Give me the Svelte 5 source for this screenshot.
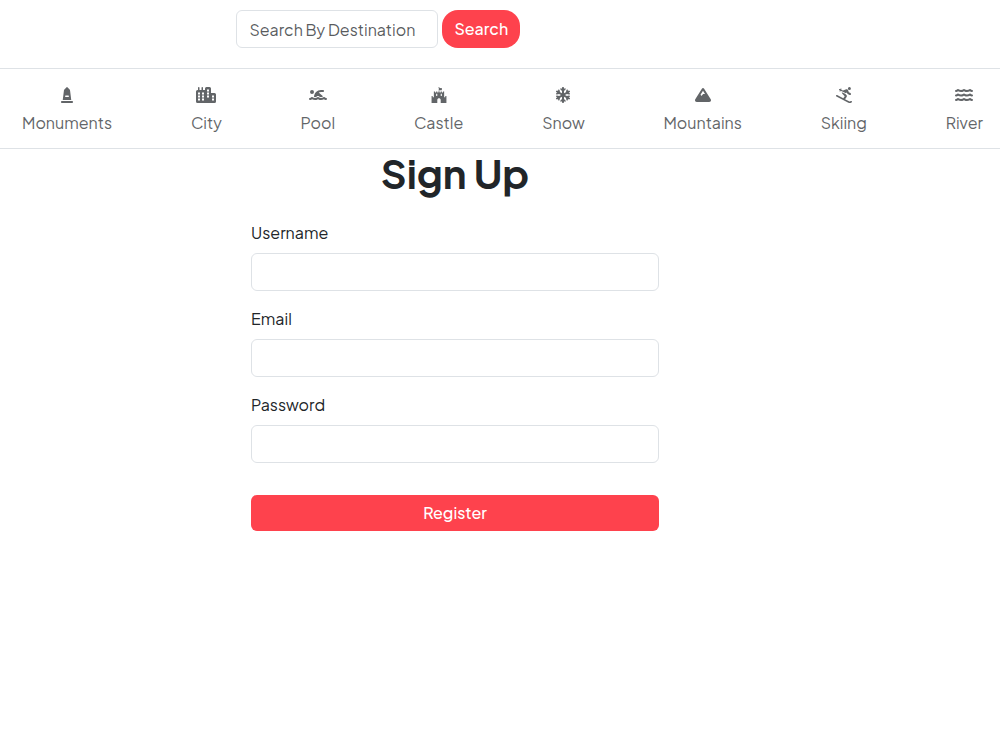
<script>
    let query = $state("");
    let user = $state({ username: "", email: "", password: "" });

    const fields = [
        { name: "username", label: "Username", type: "text" },
        { name: "email", label: "Email", type: "email" },
        { name: "password", label: "Password", type: "password" },
    ];

    // one wave line, shared by the pool and river icons
    const wave = (y) =>
        `M306.5 ${y}C329 ${y + 15.5} 356.5 ${y + 26.1} 384 ${y + 26.1}c26.9 0 55.4-10.8 77.4-26.1c11.9-8.5 28.1-7.8 39.2 1.7c14.4 11.9 32.5 21 50.6 25.2c17.2 4 27.9 21.2 23.9 38.4s-21.2 27.9-38.4 23.9c-24.5-5.7-44.9-16.5-58.2-25C449.5 ${y + 79.8} 417 ${y + 90.1} 384 ${y + 90.1}c-31.9 0-60.6-9.9-80.4-18.9c-5.8-2.7-11.1-5.3-15.6-7.7c-4.5 2.4-9.7 5.1-15.6 7.7c-19.8 9-48.5 18.9-80.4 18.9c-33 0-65.5-10.3-94.5-25.8c-13.4 8.4-33.7 19.3-58.2 25c-17.2 4-34.4-6.7-38.4-23.9s6.7-34.4 23.9-38.4c18.1-4.2 36.2-13.3 50.6-25.2c11.1-9.4 27.3-10.1 39.2-1.7C136.7 ${y + 15.3} 165.1 ${y + 26.1} 192 ${y + 26.1}c27.5 0 55-10.6 77.5-26.1c11.1-7.9 25.9-7.9 37 0z`;

    const filters = [
        {
            name: "Monuments",
            width: 384,
            path: "M180.7 4.7c6.2-6.2 16.4-6.2 22.6 0l80 80c2.5 2.5 4.1 5.8 4.6 9.3l40.2 322H55.9L96.1 94c.4-3.5 2-6.8 4.6-9.3l80-80zM152 272c-13.3 0-24 10.7-24 24s10.7 24 24 24h80c13.3 0 24-10.7 24-24s-10.7-24-24-24H152zM32 448H352c17.7 0 32 14.3 32 32s-14.3 32-32 32H32c-17.7 0-32-14.3-32-32s14.3-32 32-32z",
        },
        {
            name: "City",
            width: 640,
            path: "M64 24q0-24 24-24t24 24v72h64V24q0-24 24-24t24 24v72h64V48q0-48 48-48h96q48 0 48 48v144h112q48 0 48 48v224q0 48-48 48H48q-48 0-48-48V144q0-48 48-48h16zM64 176v64h64v-64zm128 0v64h64v-64zm160-96v64h64V80zm0 96v64h64v-64zM64 272v64h64v-64zm128 0v64h64v-64zm160 0v64h64v-64zm160 0v64h64v-64zM64 368v64h64v-64zm128 0v64h64v-64zm320 0v64h64v-64z",
        },
        {
            name: "Pool",
            width: 576,
            path:
                "M309.5 178.4L447.9 297.1c-1.6 .9-3.2 2-4.8 3c-18 12.4-40.1 20.3-59.2 20.3c-19.6 0-40.8-7.7-59.2-20.3c-22.1-15.5-51.6-15.5-73.7 0c-17.1 11.8-38 20.3-59.2 20.3c-10.1 0-21.1-2.2-31.9-6.2C163.1 193.2 262.2 96 384 96h64c17.7 0 32 14.3 32 32s-14.3 32-32 32H384c-26.9 0-52.3 6.6-74.5 18.4zM160 160A64 64 0 1 1 32 160a64 64 0 1 1 128 0z" +
                wave(325.9),
        },
        {
            name: "Castle",
            width: 512,
            path: "M489.2 287.9h-27.4c-2.6 0-4.6 2-4.6 4.6v32h-36.6V146.2c0-2.6-2-4.6-4.6-4.6h-27.4c-2.6 0-4.6 2-4.6 4.6v32h-36.6v-32c0-2.6-2-4.6-4.6-4.6h-27.4c-2.6 0-4.6 2-4.6 4.6v32h-36.6v-32c0-6-8-4.6-11.7-4.6v-38c8.3-2 17.1-3.4 25.7-3.4 10.9 0 20.9 4.3 31.4 4.3 4.6 0 27.7-1.1 27.7-8v-60c0-2.6-2-4.6-4.6-4.6-5.1 0-15.1 4.3-24 4.3-9.7 0-20.9-4.3-32.6-4.3-8 0-16 1.1-23.7 2.9v-4.9c5.4-2.6 9.1-8.3 9.1-14.3 0-20.7-31.4-20.8-31.4 0 0 6 3.7 11.7 9.1 14.3v111.7c-3.7 0-11.7-1.4-11.7 4.6v32h-36.6v-32c0-2.6-2-4.6-4.6-4.6h-27.4c-2.6 0-4.6 2-4.6 4.6v32H128v-32c0-2.6-2-4.6-4.6-4.6H96c-2.6 0-4.6 2-4.6 4.6v178.3H54.8v-32c0-2.6-2-4.6-4.6-4.6H22.8c-2.6 0-4.6 2-4.6 4.6V512h182.9v-96c0-72.6 109.7-72.6 109.7 0v96h182.9V292.5c.1-2.6-1.9-4.6-4.5-4.6zm-288.1-4.5c0 2.6-2 4.6-4.6 4.6h-27.4c-2.6 0-4.6-2-4.6-4.6v-64c0-2.6 2-4.6 4.6-4.6h27.4c2.6 0 4.6 2 4.6 4.6v64zm146.4 0c0 2.6-2 4.6-4.6 4.6h-27.4c-2.6 0-4.6-2-4.6-4.6v-64c0-2.6 2-4.6 4.6-4.6h27.4c2.6 0 4.6 2 4.6 4.6v64z",
        },
        {
            name: "Snow",
            width: 448,
            path: "M224 0c17.7 0 32 14.3 32 32V62.1l15-15c9.4-9.4 24.6-9.4 33.9 0s9.4 24.6 0 33.9l-49 49v70.3l61.4-35.8 17.7-66.1c3.4-12.8 16.6-20.4 29.4-17s20.4 16.6 17 29.4l-5.2 19.3 23.6-13.8c15.3-8.9 34.9-3.7 43.8 11.5s3.8 34.9-11.5 43.8l-25.3 14.8 21.7 5.8c12.8 3.4 20.4 16.6 17 29.4s-16.6 20.4-29.4 17l-67.7-18.1L287.5 256l60.9 35.5 67.7-18.1c12.8-3.4 26 4.2 29.4 17s-4.2 26-17 29.4l-21.7 5.8 25.3 14.8c15.3 8.9 20.4 28.5 11.5 43.8s-28.5 20.4-43.8 11.5l-23.6-13.8 5.2 19.3c3.4 12.8-4.2 26-17 29.4s-26-4.2-29.4-17l-17.7-66.1L256 311.7v70.3l49 49c9.4 9.4 9.4 24.6 0 33.9s-24.6 9.4-33.9 0l-15-15V480c0 17.7-14.3 32-32 32s-32-14.3-32-32V449.9l-15 15c-9.4 9.4-24.6 9.4-33.9 0s-9.4-24.6 0-33.9l49-49V311.7l-61.4 35.8-17.7 66.1c-3.4 12.8-16.6 20.4-29.4 17s-20.4-16.6-17-29.4l5.2-19.3L48.1 395.6c-15.3 8.9-34.9 3.7-43.8-11.5s-3.7-34.9 11.5-43.8l25.3-14.8-21.7-5.8c-12.8-3.4-20.4-16.6-17-29.4s16.6-20.4 29.4-17l67.7 18.1L160.5 256 99.6 220.5 31.9 238.6c-12.8 3.4-26-4.2-29.4-17s4.2-26 17-29.4l21.7-5.8L15.9 171.6C.6 162.7-4.5 143.1 4.4 127.9s28.5-20.4 43.8-11.5l23.6 13.8-5.2-19.3c-3.4-12.8 4.2-26 17-29.4s26 4.2 29.4 17l17.7 66.1L192 200.3V129.9L143 81c-9.4-9.4-9.4-24.6 0-33.9s24.6-9.4 33.9 0l15 15V32c0-17.7 14.3-32 32-32z",
        },
        {
            name: "Mountains",
            width: 512,
            path: "M256 32c12.5 0 24.1 6.4 30.8 17L503.4 394.4c5.6 8.9 8.6 19.2 8.6 29.7c0 30.9-25 55.9-55.9 55.9H55.9C25 480 0 455 0 424.1c0-10.5 3-20.8 8.6-29.7L225.2 49c6.6-10.6 18.3-17 30.8-17zm65 192L256 120.4 176.9 246.5l18.3 24.4c6.4 8.5 19.2 8.5 25.6 0l25.6-34.1c6-8.1 15.5-12.8 25.6-12.8h49z",
        },
        {
            name: "Skiing",
            width: 512,
            path: "M380.7 48a48 48 0 1 1 96 0 48 48 0 1 1 -96 0zM2.7 268.9c6.1-11.8 20.6-16.3 32.4-10.2L232.7 361.3l46.2-69.2-75.1-75.1c-14.6-14.6-20.4-33.9-18.4-52.1l108.8 52 39.3 39.3c16.2 16.2 18.7 41.5 6 60.6L289.8 391l128.7 66.8c13.6 7.1 29.8 7.2 43.6 .3l15.2-7.6c11.9-5.9 26.3-1.1 32.2 10.7s1.1 26.3-10.7 32.2l-15.2 7.6c-27.5 13.7-59.9 13.5-87.2-.7L12.9 301.3C1.2 295.2-3.4 280.7 2.7 268.9zM118.9 65.6L137 74.2l8.7-17.4c4-7.9 13.6-11.1 21.5-7.2s11.1 13.6 7.2 21.5l-8.5 16.9 54.7 26.2c1.5-.7 3.1-1.4 4.7-2.1l83.4-33.4c34.2-13.7 72.8 4.2 84.5 39.2l17.1 51.2 52.1 26.1c15.8 7.9 22.2 27.1 14.3 42.9s-27.1 22.2-42.9 14.3l-58.1-29c-11.4-5.7-20-15.7-24.1-27.8l-5.8-17.3-27.3 12.1-6.8 3-6.7-3.2L151.5 116.7l-9.2 18.4c-4 7.9-13.6 11.1-21.5 7.2s-11.1-13.6-7.2-21.5l9-18-17.6-8.4c-8-3.8-11.3-13.4-7.5-21.3s13.4-11.3 21.3-7.5z",
        },
        {
            name: "River",
            width: 576,
            path: wave(69.9) + wave(213.9) + wave(357.9),
        },
    ];
</script>

<header>
    <form class="search" role="search">
        <input
            type="text"
            class="search-inp"
            placeholder="Search By Destination"
            aria-label="Search By Destination"
            bind:value={query}
        />
        <button type="button" class="search-btn">Search</button>
    </form>
</header>

<nav class="filters">
    {#each filters as filter (filter.name)}
        <a class="filter" href="#{filter.name.toLowerCase()}">
            <span class="icon">
                <svg viewBox="0 0 {filter.width} 512" aria-hidden="true">
                    <path d={filter.path} fill-rule="evenodd" />
                </svg>
            </span>
            <span>{filter.name}</span>
        </a>
    {/each}
</nav>

<main>
    <form class="signup">
        <h1>Sign Up</h1>
        {#each fields as field (field.name)}
            <div class="field">
                <label for={field.name}>{field.label}</label>
                <input
                    id={field.name}
                    type={field.type}
                    value={user[field.name]}
                    oninput={(e) => (user[field.name] = e.target.value)}
                />
            </div>
        {/each}
        <button type="button" class="register">Register</button>
    </form>
</main>

<style>
    :global(body) {
        background: #fff;
        color: #212529;
        font-family: "Plus Jakarta Sans", Inter, sans-serif;
        font-size: 16px;
        font-weight: 400;
        line-height: 24px;
    }

    header {
        padding: 10px 12px 20px;
        border-bottom: 1px solid #dee2e6;
    }

    .search {
        display: flex;
        gap: 4px;
        margin-left: 23%;
    }

    input {
        box-sizing: border-box;
        width: 100%;
        height: 38px;
        padding: 6px 12px;
        border: 1px solid #dee2e6;
        border-radius: 6px;
        background: #fff;
        color: inherit;
        font: inherit;
    }

    input::placeholder {
        color: #212529bf;
        opacity: 1;
    }

    .search-inp {
        width: 202px;
    }

    button {
        border: 0;
        background: #fe424d;
        color: #fff;
        font: inherit;
        font-weight: 500;
        cursor: pointer;
    }

    .search-btn {
        padding: 6px 12px;
        border-radius: 16px;
    }

    .filters {
        display: flex;
        justify-content: space-between;
        padding: 14px 17px 13px 22px;
        border-bottom: 1px solid #dee2e6;
    }

    .filter {
        display: flex;
        flex-direction: column;
        align-items: center;
        color: #212529;
        text-decoration: none;
        opacity: 0.7;
    }

    .filter:hover {
        opacity: 1;
    }

    .icon {
        display: flex;
        align-items: center;
        height: 24px;
    }

    svg {
        display: block;
        height: 16px;
        fill: currentColor;
    }

    .filter span + span {
        padding-top: 4px;
    }

    main {
        padding-right: 9%;
    }

    .signup {
        max-width: 408px;
        margin: 0 auto;
    }

    h1 {
        margin: 0 0 24px;
        font-size: 40px;
        font-weight: 700;
        line-height: 48px;
        text-align: center;
    }

    .field {
        margin-bottom: 16px;
    }

    label {
        display: block;
        margin-bottom: 8px;
    }

    .register {
        width: 100%;
        margin-top: 16px;
        padding: 6px;
        border-radius: 6px;
    }
</style>
